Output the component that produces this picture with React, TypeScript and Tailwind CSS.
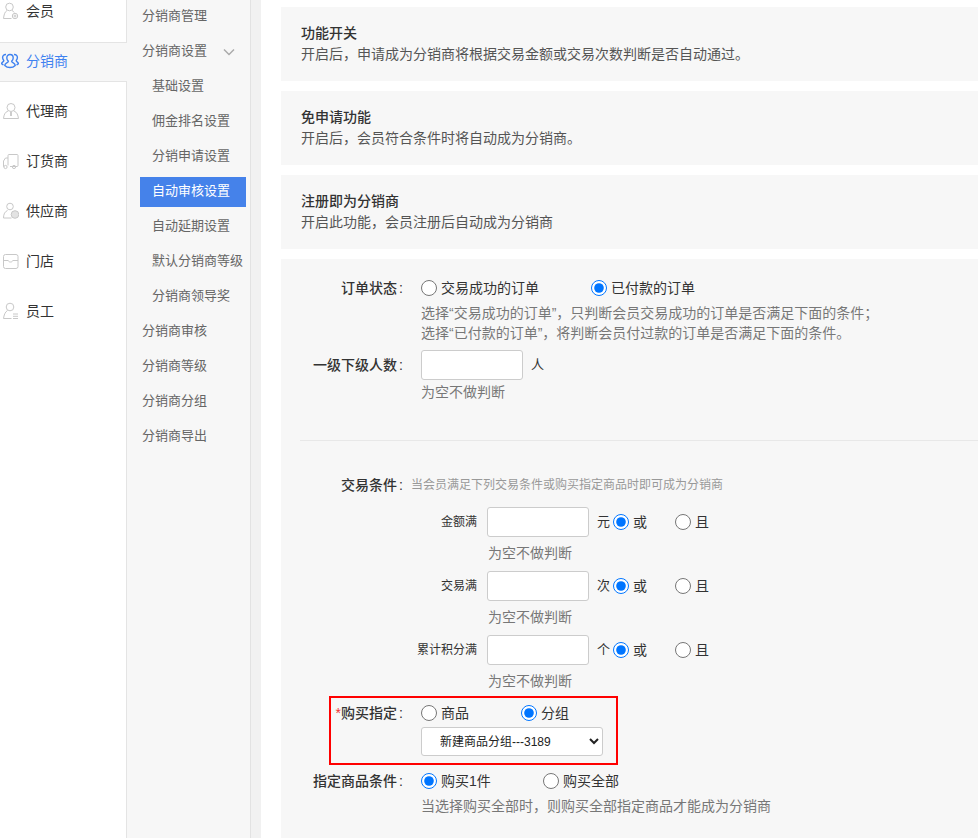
import type { ReactNode } from "react";

/* Icons */

const iconProps = {
  width: 18,
  height: 18,
  viewBox: "0 0 18 18",
  fill: "none",
  stroke: "currentColor",
  strokeWidth: 1,
};

function MemberIcon() {
  return (
    <svg {...iconProps}>
      <circle cx="8.500" cy="5" r="3.800" />
      <path d="M6 8.500C3.500 10 3 13 2.500 16.500h8" />
      <path d="M11 8.500c1 .5 1.600 1 2.200 2" />
      <circle cx="14" cy="14" r="2.700" />
      <circle cx="14" cy="14" r="1" />
    </svg>
  );
}

function GroupIcon() {
  return (
    <svg {...iconProps} strokeWidth={1.400}>
      <path d="M9 2.500c2 0 3.200 1.500 3.200 3.400 0 1.600-.8 2.600-1.600 3.400 0 .8.500 1.200 2 1.900 1 .5 1.500 1.200 1.600 2.200-1.300 1.400-3 2.100-5.200 2.100s-3.900-.7-5.200-2.100c.1-1 .6-1.700 1.600-2.200 1.500-.7 2-1.100 2-1.900-.8-.8-1.600-1.800-1.600-3.400C5.800 4 7 2.500 9 2.500z" />
      <path d="M5 2.500C3 2.300 1.600 3.700 1.600 5.600c0 1.300.6 2.200 1.200 2.900 0 .8-.4 1.100-1.200 1.600-.6.400-.9.900-1 1.500.4.600 1 1 1.900 1.300" />
      <path d="M13 2.500c2-.2 3.400 1.200 3.400 3.100 0 1.300-.6 2.200-1.200 2.900 0 .8.400 1.100 1.200 1.600.6.400.9.900 1 1.500-.4.600-1 1-1.900 1.300" />
    </svg>
  );
}

function AgentIcon() {
  return (
    <svg {...iconProps}>
      <circle cx="10" cy="5.500" r="4" />
      <path d="M7 9c-3 1.200-4 3.500-4.500 7.500h15C17 13 16 10.200 13 9" />
      <path d="M10 10v4" strokeWidth={1.800} />
    </svg>
  );
}

function TruckIcon() {
  return (
    <svg {...iconProps}>
      <path d="M7 13.500V3.500c0-.6.400-1 1-1h8c.6 0 1 .4 1 1v10c0 .6-.4 1-1 1H9" />
      <path d="M7 6H4.500L2.500 9v5.500h.5" />
      <circle cx="4.500" cy="15" r="1.600" />
      <circle cx="13" cy="15" r="1.600" />
    </svg>
  );
}

function SupplierIcon() {
  return (
    <svg {...iconProps}>
      <circle cx="9" cy="4.500" r="3.300" />
      <path d="M6.500 8.500C4 9.500 2.500 12 2.500 16h8" />
      <circle cx="14" cy="12.500" r="3.800" fill="currentColor" fillOpacity={0.5} />
    </svg>
  );
}

function StoreIcon() {
  return (
    <svg {...iconProps}>
      <rect x="2.500" y="2.500" width="14.500" height="14" rx="2" />
      <path d="M2.500 8.500h4.700c.3 1 1.100 1.500 2.300 1.500s2-.5 2.300-1.500H17" />
    </svg>
  );
}

function StaffIcon() {
  return (
    <svg {...iconProps}>
      <circle cx="9" cy="5" r="3.800" />
      <path d="M6.500 8.500C4 10 3 13 2.500 16.500h8" />
      <path d="M12 12h5M12 14.300h5M12 16.500h5" />
    </svg>
  );
}

/* Constants */

const MAIN_NAV: { label: string; icon: ReactNode; active?: boolean }[] = [
  { label: "会员", icon: <MemberIcon /> },
  { label: "分销商", icon: <GroupIcon />, active: true },
  { label: "代理商", icon: <AgentIcon /> },
  { label: "订货商", icon: <TruckIcon /> },
  { label: "供应商", icon: <SupplierIcon /> },
  { label: "门店", icon: <StoreIcon /> },
  { label: "员工", icon: <StaffIcon /> },
];

const SUB_NAV_AFTER = ["分销商审核", "分销商等级", "分销商分组", "分销商导出"];
const SUB_SETTINGS = [
  "基础设置",
  "佣金排名设置",
  "分销申请设置",
  "自动审核设置",
  "自动延期设置",
  "默认分销商等级",
  "分销商领导奖",
];

/* Sidebars */

function MainSidebar() {
  return (
    <nav className="w-[127px] shrink-0 border-r border-[#e4e4e4] -mt-[8px]">
      {MAIN_NAV.map(({ label, icon, active }) => (
        <div
          key={label}
          className={
            active
              ? "flex items-center h-10 mb-2.5 pb-[2px] -mr-px border-y border-[#e4e4e4] bg-[#f7f7f7] text-[#3f82f0]"
              : "flex items-center h-10 mb-2.5 pb-[2px] text-[#333]"
          }
        >
          <span className={active ? "w-[26px] pl-[1px]" : "w-[26px] pl-[1px] text-[#c8c8c8]"}>{icon}</span>
          <span className="text-sm">{label}</span>
        </div>
      ))}
    </nav>
  );
}

function SubSidebar() {
  return (
    <nav className="w-[124px] shrink-0 bg-[#f7f7f7] border-r border-[#e2e2e2] text-[13px] leading-5 text-[#666]">
      <div className="flex items-center h-[35px] pl-[15px] -mt-[1px]">
        <span className="pb-[1px]">分销商管理</span>
      </div>
      <div className="flex items-center justify-between h-[35px] pl-[15px] pr-[15px]">
        <span className="pb-[1px]">分销商设置</span>
        <svg width="12" height="8" viewBox="0 0 12 8" fill="none" stroke="#aaa" strokeWidth="1.500">
          <path d="M1 1.500l5 5 5-5" />
        </svg>
      </div>
      {SUB_SETTINGS.map((item) => (
        <div key={item} className="flex items-center h-[35px] pl-[13px]">
          <span
            className={
              item === "自动审核设置"
                ? "flex items-center w-[106px] h-[30px] pl-3 pb-[1px] bg-[#4582ea] text-white"
                : "pl-3 pb-[1px] whitespace-nowrap"
            }
          >
            {item}
          </span>
        </div>
      ))}
      {SUB_NAV_AFTER.map((item) => (
        <div key={item} className="flex items-center h-[35px] pl-[15px]">
          <span className="pb-[1px]">{item}</span>
        </div>
      ))}
    </nav>
  );
}

/* Form */

function SwitchCard({ title, desc }: { title: string; desc: string }) {
  return (
    <section className="h-[74px] mb-2.5 pl-5 pb-[1px] bg-[#f7f7f7] flex flex-col justify-center">
      <h3 className="text-sm font-medium leading-5 text-[#333]">{title}</h3>
      <p className="text-sm leading-[22px] text-[#555]">{desc}</p>
    </section>
  );
}

function Radio({ label, name, checked, className }: { label: string; name: string; checked?: boolean; className: string }) {
  return (
    <label className={`flex items-center gap-[4px] text-sm text-[#333] ${className}`}>
      <input type="radio" name={name} defaultChecked={checked} className="w-4 h-4 m-0" />
      {label}
    </label>
  );
}

function Colon() {
  return <span className="inline-block w-[6px] text-right">:</span>;
}

function FormLabel({ children }: { children: ReactNode }) {
  return (
    <div className="w-[122px] shrink-0 text-right text-sm font-medium text-[#333] whitespace-nowrap">
      {children}
      <Colon />
    </div>
  );
}

function TextBox({ className }: { className: string }) {
  return <input type="text" className={`h-[30px] bg-white border border-[#ccc] rounded-[3px] ${className}`} />;
}

function Hint({ children, className = "" }: { children: ReactNode; className?: string }) {
  return <p className={`text-sm leading-5 text-[#777] ${className}`}>{children}</p>;
}

function TradeRow({ label, unit, name }: { label: string; unit: string; name: string }) {
  return (
    <div className="mb-[8px]">
      <div className="flex items-center h-[30px]">
        <span className="w-[196px] shrink-0 text-right text-xs text-[#333]">{label}</span>
        <TextBox className="w-[102px] ml-[10px]" />
        <span className="ml-[8px] w-[15px] text-[13px] text-[#333]">{unit}</span>
        <Radio name={name} label="或" checked className="ml-px w-[62px]" />
        <Radio name={name} label="且" className="" />
      </div>
      <Hint className="ml-[207px] mt-[6px]">为空不做判断</Hint>
    </div>
  );
}

function AuditForm() {
  return (
    <section className="bg-[#f7f7f7] pt-[19px] pb-[22px]">
      <div className="flex items-center h-5">
        <FormLabel>订单状态</FormLabel>
        <div className="flex ml-[18px]">
          <Radio name="order" label="交易成功的订单" className="w-[170px]" />
          <Radio name="order" label="已付款的订单" checked className="" />
        </div>
      </div>
      <div className="ml-[140px] mt-[5px]">
        <Hint>选择“交易成功的订单”，只判断会员交易成功的订单是否满足下面的条件；</Hint>
        <Hint>选择“已付款的订单”，将判断会员付过款的订单是否满足下面的条件。</Hint>
      </div>
      <div className="flex items-center mt-[7px]">
        <FormLabel>一级下级人数</FormLabel>
        <TextBox className="w-[102px] ml-[18px]" />
        <span className="ml-[8px] text-[13px] text-[#333]">人</span>
      </div>
      <Hint className="ml-[140px] mt-[2px]">为空不做判断</Hint>

      <div className="ml-[19px] mt-[38px] mb-[34px] border-t border-[#e8e8e8]" />

      <div className="flex items-center h-5 mb-[12px]">
        <FormLabel>交易条件</FormLabel>
        <span className="ml-2 text-xs text-[#999]">当会员满足下列交易条件或购买指定商品时即可成为分销商</span>
      </div>
      <TradeRow label="金额满" unit="元" name="amount" />
      <TradeRow label="交易满" unit="次" name="count" />
      <TradeRow label="累计积分满" unit="个" name="points" />

      <div className="w-[289px] h-[69px] ml-[48px] -mt-[3px] mb-[6px] border-2 border-[#f00] pt-[5px]">
        <div className="flex items-center h-5">
          <div className="w-[72px] shrink-0 text-right text-sm font-medium text-[#333] whitespace-nowrap">
            <span className="text-[#e33] font-normal">*</span>购买指定
            <Colon />
          </div>
          <div className="flex ml-[18px]">
            <Radio name="buy" label="商品" className="w-[100px]" />
            <Radio name="buy" label="分组" checked className="" />
          </div>
        </div>
        <select className="block w-[182px] h-[29px] ml-[90px] mt-[4px] pl-[14px] bg-white border border-[#ccc] rounded-[3px] text-xs text-[#222]">
          <option>新建商品分组---3189</option>
        </select>
      </div>

      <div className="flex items-center h-5">
        <FormLabel>指定商品条件</FormLabel>
        <div className="flex ml-[18px]">
          <Radio name="cond" label="购买1件" checked className="w-[122px]" />
          <Radio name="cond" label="购买全部" className="" />
        </div>
      </div>
      <Hint className="ml-[140px] mt-[5px]">当选择购买全部时，则购买全部指定商品才能成为分销商</Hint>
    </section>
  );
}

/* Page */

export default function App() {
  return (
    <div
      className="flex h-[838px] overflow-hidden bg-white"
      style={{ fontFamily: '"Liberation Sans", "Noto Sans CJK SC", sans-serif' }}
    >
      <MainSidebar />
      <SubSidebar />
      <div className="w-[10px] shrink-0 bg-[#f1f1f1]" />
      <main className="flex-1 pl-5 pt-[7px] min-w-0">
        <SwitchCard title="功能开关" desc="开启后，申请成为分销商将根据交易金额或交易次数判断是否自动通过。" />
        <SwitchCard title="免申请功能" desc="开启后，会员符合条件时将自动成为分销商。" />
        <SwitchCard title="注册即为分销商" desc="开启此功能，会员注册后自动成为分销商" />
        <AuditForm />
      </main>
    </div>
  );
}
